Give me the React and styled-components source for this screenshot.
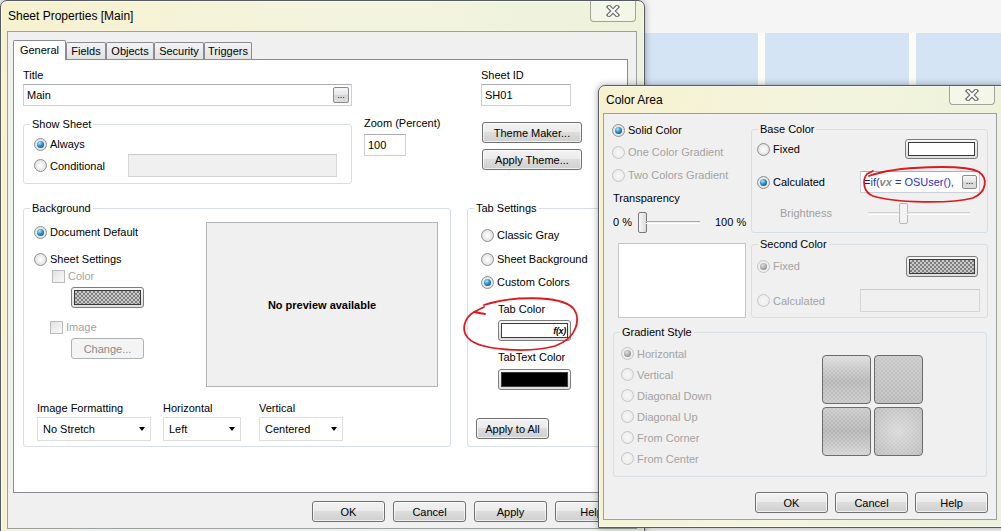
import React from 'react';
import styled, { createGlobalStyle } from 'styled-components';

const GlobalStyle = createGlobalStyle`
  html, body {
    margin: 0;
    padding: 0;
  }
  body {
    font-family: "Liberation Sans", Arial, sans-serif;
    font-size: 11px;
    color: #000;
    background: #fbfbfb;
  }
`;

const Desktop = styled.div`
  position: relative;
  width: 1001px;
  height: 531px;
  overflow: hidden;
  background: #fafafa;
`;

const TopStrip = styled.div`
  height: 33px;
  background: #f5f5f5;
`;

const TileRow = styled.div`
  display: flex;
  height: 52px;
  padding-left: 500px;
  gap: 7px;
  background: #fbfbf7;
`;

const Tile = styled.div`
  flex: none;
  width: ${p => p.$w}px;
  background: #d4e4f5;
`;

const Window = styled.div`
  position: absolute;
  left: ${p => p.$x}px;
  top: ${p => p.$y}px;
  width: ${p => p.$w}px;
  height: ${p => p.$h}px;
  box-sizing: border-box;
  display: flex;
  flex-direction: column;
  border: 1px solid #555b60;
  border-radius: 7px 7px 0 0;
  background: linear-gradient(100deg, #f7f1cf 0%, #f3f4de 45%, #edf2da 100%);
  box-shadow: 0 0 7px rgba(0, 0, 0, 0.35), inset 0 0 0 1px rgba(255, 255, 255, 0.6);
`;

const TitleBar = styled.div`
  display: flex;
  align-items: center;
  flex: none;
  height: ${p => p.$h}px;
  padding-left: 7px;
`;

const TitleText = styled.span`
  font-size: 12px;
  color: #000;
`;

const CloseButton = styled.div`
  box-sizing: border-box;
  align-self: flex-start;
  display: flex;
  align-items: center;
  justify-content: center;
  width: 46px;
  height: ${p => p.$h}px;
  margin-left: auto;
  margin-right: ${p => p.$mr}px;
  border: 1px solid rgba(60, 60, 60, 0.45);
  border-top: none;
  border-radius: 0 0 4px 4px;
  background: rgba(255, 255, 255, 0.35);
`;

const Client = styled.div`
  box-sizing: border-box;
  display: flex;
  flex-direction: column;
  width: ${p => p.$w}px;
  margin-left: ${p => p.$ml}px;
  padding: ${p => p.$p};
  border: 1px solid #98a1a9;
  background: #f0f0f0;
`;

const TabStrip = styled.div`
  display: flex;
  align-items: flex-end;
  height: 19px;
`;

const Tab = styled.div`
  box-sizing: border-box;
  position: ${p => (p.$active ? 'relative' : 'static')};
  z-index: 2;
  display: flex;
  align-items: center;
  justify-content: center;
  width: ${p => p.$w}px;
  height: ${p => (p.$active ? 20 : 17)}px;
  margin-bottom: ${p => (p.$active ? -1 : 0)}px;
  padding-bottom: ${p => (p.$active ? 2 : 0)}px;
  border: 1px solid #898c95;
  border-bottom: none;
  border-radius: 2px 2px 0 0;
  background: ${p => (p.$active ? '#fff' : 'linear-gradient(#f3f3f3, #e3e3e3)')};
`;

const TabPanel = styled.div`
  box-sizing: border-box;
  height: 434px;
  padding: 8px 0 0 9px;
  border: 1px solid #898c95;
  background: #fff;
`;

const Row = styled.div`
  display: flex;
  align-items: ${p => p.$align || 'flex-start'};
  margin-top: ${p => p.$mt || 0}px;
`;

const Column = styled.div`
  box-sizing: border-box;
  display: flex;
  flex-direction: column;
  flex: none;
  width: ${p => (p.$w ? `${p.$w}px` : 'auto')};
  margin-left: ${p => p.$ml || 0}px;
  margin-top: ${p => p.$mt || 0}px;
  padding-left: ${p => p.$pl || 0}px;
`;

const Label = styled.div`
  flex: none;
  height: 14px;
  line-height: 14px;
  white-space: nowrap;
  width: ${p => (p.$w ? `${p.$w}px` : 'auto')};
  margin-top: ${p => p.$mt || 0}px;
  margin-left: ${p => p.$ml || 0}px;
  color: ${p => (p.$disabled ? '#a0a0a0' : '#000')};
`;

const TextField = styled.div`
  box-sizing: border-box;
  display: flex;
  align-items: center;
  flex: none;
  width: ${p => (p.$w ? `${p.$w}px` : '100%')};
  height: ${p => p.$h || 22}px;
  margin-top: ${p => p.$mt || 0}px;
  margin-left: ${p => (p.$auto ? 'auto' : '0')};
  margin-right: ${p => p.$mr || 0}px;
  padding: 0 2px 0 3px;
  border: 1px solid ${p => (p.$disabled ? '#d6d6d6' : '#ccd0d6')};
  border-top-color: ${p => (p.$disabled ? '#cacaca' : '#abadb3')};
  background: ${p => (p.$disabled ? '#f0f0f0' : '#fff')};
  white-space: nowrap;
  overflow: hidden;
`;

const DotsButton = styled.div`
  box-sizing: border-box;
  flex: none;
  display: flex;
  align-items: flex-end;
  justify-content: center;
  width: ${p => p.$w || 16}px;
  height: ${p => p.$h || 16}px;
  margin-left: auto;
  padding-bottom: 2px;
  border: 1px solid #8a8a8a;
  border-radius: 2px;
  background: linear-gradient(#f7f7f7, #e4e4e4 50%, #d5d5d5 51%, #dedede);
  font-size: 9px;
  line-height: 1;
`;

const Group = styled.fieldset`
  box-sizing: border-box;
  flex: none;
  min-width: 0;
  width: ${p => (p.$w ? `${p.$w}px` : 'auto')};
  margin: ${p => p.$m || '0'};
  padding: 0;
  border: 1px solid #d5dfe5;
  border-radius: 3px;
`;

const Legend = styled.legend`
  height: 14px;
  margin-left: 6px;
  padding: 0 2px;
  line-height: 14px;
  font-size: 11px;
`;

const GroupBody = styled.div`
  display: flex;
  flex-direction: ${p => p.$dir || 'column'};
  padding: ${p => p.$p || '0'};
`;

const RadioRow = styled.div`
  display: flex;
  align-items: center;
  gap: 3px;
  flex: none;
  height: ${p => p.$h || 20}px;
  margin-top: ${p => p.$mt || 0}px;
  padding-left: ${p => p.$pl || 0}px;
  white-space: nowrap;
`;

const Radio = styled.span`
  position: relative;
  box-sizing: border-box;
  flex: none;
  width: 13px;
  height: 13px;
  border-radius: 50%;
  border: 1px solid ${p => (p.$disabled ? '#c4c6c8' : '#8e8f8f')};
  background: ${p =>
    p.$disabled
      ? 'radial-gradient(circle, #f8f8f8 0, #eeeeee 60%, #e2e2e2 100%)'
      : 'radial-gradient(circle, #ffffff 0, #eeeeee 45%, #d2d2d2 100%)'};

  &::after {
    content: '';
    display: ${p => (p.$checked ? 'block' : 'none')};
    position: absolute;
    left: 2px;
    top: 2px;
    width: 7px;
    height: 7px;
    border-radius: 50%;
    background: ${p =>
      p.$disabled
        ? 'radial-gradient(circle at 40% 35%, #e2e2e2 0, #a4a4a4 55%, #7c7c7c 100%)'
        : 'radial-gradient(circle at 38% 32%, #b4ecff 0, #3596d4 40%, #0d4e7a 85%)'};
  }
`;

const OptionText = styled.span`
  color: ${p => (p.$disabled ? '#a3a3a3' : '#000')};
`;

const Checkbox = styled.span`
  box-sizing: border-box;
  flex: none;
  width: 13px;
  height: 13px;
  border: 1px solid #b9bbbd;
  background: linear-gradient(135deg, #e3e3e3, #f9f9f9);
`;

const Button = styled.div`
  box-sizing: border-box;
  flex: none;
  display: flex;
  align-items: center;
  justify-content: center;
  width: ${p => p.$w || 73}px;
  height: 21px;
  margin-top: ${p => p.$mt || 0}px;
  margin-left: ${p => p.$ml || 0}px;
  border: 1px solid ${p => (p.$disabled ? '#adb2b5' : '#707070')};
  border-radius: 3px;
  background: ${p =>
    p.$disabled ? '#f4f4f4' : 'linear-gradient(#f2f2f2 0%, #ebebeb 45%, #dddddd 50%, #cfcfcf 100%)'};
  box-shadow: ${p => (p.$disabled ? 'none' : 'inset 0 0 0 1px rgba(255, 255, 255, 0.7)')};
  color: ${p => (p.$disabled ? '#8b8b8b' : '#000')};
  white-space: nowrap;
`;

const ButtonRow = styled.div`
  display: flex;
  justify-content: flex-end;
  gap: ${p => p.$gap}px;
  margin-top: ${p => p.$mt}px;
  padding-right: ${p => p.$pr || 0}px;
`;

const fills = {
  white: '#fff',
  black: '#000',
  check: 'repeating-conic-gradient(#7f7f7f 0 25%, #c9c9c9 0 50%) 0 0 / 4px 4px'
};

const Swatch = styled.div`
  box-sizing: border-box;
  flex: none;
  display: flex;
  width: ${p => p.$w || 73}px;
  height: ${p => p.$h || 21}px;
  margin-top: ${p => p.$mt || 0}px;
  margin-left: ${p => (p.$auto ? 'auto' : `${p.$ml || 0}px`)};
  margin-right: ${p => p.$mr || 0}px;
  padding: 2px;
  border: 1px solid #7c7c7c;
  border-radius: 3px;
  background: linear-gradient(#f7f7f7, #dedede);
`;

const SwatchFill = styled.div`
  flex: 1;
  display: flex;
  align-items: center;
  justify-content: flex-end;
  padding-right: 1px;
  border: 1px solid #3a3a3a;
  background: ${p => fills[p.$fill]};
`;

const Fx = styled.span`
  font-size: 9px;
  font-weight: bold;
  font-style: italic;
  letter-spacing: -0.3px;
`;

const SelectField = styled.div`
  box-sizing: border-box;
  display: flex;
  align-items: center;
  justify-content: space-between;
  width: ${p => p.$w}px;
  height: 24px;
  margin-top: 2px;
  padding: 0 5px;
  border: 1px solid #dedede;
  background: #fff;
`;

const Arrow = styled.span`
  width: 0;
  height: 0;
  border-left: 3.5px solid transparent;
  border-right: 3.5px solid transparent;
  border-top: 4px solid #000;
`;

const Preview = styled.div`
  box-sizing: border-box;
  flex: none;
  display: flex;
  align-items: center;
  justify-content: center;
  width: ${p => p.$w}px;
  height: ${p => p.$h}px;
  margin-top: ${p => p.$mt || 0}px;
  margin-left: ${p => p.$ml || 0}px;
  border: 1px solid ${p => (p.$white ? '#c6c6c6' : '#b4b4b4')};
  background: ${p => (p.$white ? '#fff' : '#f0f0f0')};
  font-weight: bold;
`;

const SliderBox = styled.div`
  display: flex;
  align-items: center;
  flex: none;
  width: ${p => p.$w}px;
  height: 21px;
  margin-left: ${p => (p.$auto ? 'auto' : `${p.$ml || 0}px`)};
  margin-right: ${p => p.$mr || 0}px;
`;

const Track = styled.div`
  flex: ${p => (p.$w ? 'none' : '1')};
  width: ${p => (p.$w ? `${p.$w}px` : 'auto')};
  height: 1px;
  border-top: 1px solid ${p => (p.$disabled ? '#cfcfcf' : '#a9a9a9')};
  border-bottom: 1px solid #fff;
`;

const Thumb = styled.div`
  box-sizing: border-box;
  flex: none;
  width: 9px;
  height: 21px;
  margin-right: -1px;
  border: 1px solid ${p => (p.$disabled ? '#b8b8b8' : '#777')};
  border-radius: 2px;
  background: ${p => (p.$disabled ? '#f3f3f3' : 'linear-gradient(90deg, #f8f8f8, #dcdcdc)')};
`;

const Expr = styled.span`
  color: ${p => p.$c};
  font-weight: ${p => (p.$var ? 'bold' : 'normal')};
  font-style: ${p => (p.$var ? 'italic' : 'normal')};
`;

const GradientGrid = styled.div`
  display: grid;
  grid-template-columns: 49px 49px;
  grid-auto-rows: 49px;
  gap: 3px;
  margin-top: 16px;
`;

const GradientCell = styled.div`
  box-sizing: border-box;
  border: 1px solid #6c6c6c;
  border-radius: 4px;
  background: repeating-conic-gradient(rgba(255, 255, 255, 0.16) 0 25%, transparent 0 50%) 0 0 / 4px 4px,
    ${p => p.$bg};
`;

const Spacer = styled.div`
  flex: none;
  height: ${p => p.$h}px;
`;

const Annotation = styled.svg`
  position: absolute;
  left: ${p => p.$x}px;
  top: ${p => p.$y}px;
  overflow: visible;
  pointer-events: none;
`;

const CloseGlyph = () => (
  <svg width="16" height="12" viewBox="0 0 16 12">
    <path d="M4 2 L12 10 M12 2 L4 10" stroke="#6a6a6a" strokeWidth="4.4" strokeLinecap="square" />
    <path d="M4 2 L12 10 M12 2 L4 10" stroke="#fff" strokeWidth="2" strokeLinecap="square" />
  </svg>
);

const tabs = [
  { name: 'General', w: 53, active: true },
  { name: 'Fields', w: 40 },
  { name: 'Objects', w: 48 },
  { name: 'Security', w: 50 },
  { name: 'Triggers', w: 48 }
];

const gradientOptions = ['Horizontal', 'Vertical', 'Diagonal Down', 'Diagonal Up', 'From Corner', 'From Center'];

const gradientCells = [
  'linear-gradient(#dcdcdc, #b6b6b6 55%, #c6c6c6)',
  'linear-gradient(#c8c8c8, #bababa)',
  'linear-gradient(#c9c9c9, #b3b3b3 50%, #d3d3d3)',
  'radial-gradient(circle, #d9d9d9, #bcbcbc)'
];

function SheetProperties() {
  return (
    <Window $x={0} $y={0} $w={645} $h={540}>
      <TitleBar $h={30}>
        <TitleText>Sheet Properties [Main]</TitleText>
        <CloseButton $h={21} $mr={8}>
          <CloseGlyph />
        </CloseButton>
      </TitleBar>
      <Client $w={630} $ml={6} $p="8px 8px 6px 5px">
        <TabStrip>
          {tabs.map(tab => (
            <Tab key={tab.name} $w={tab.w} $active={tab.active}>
              {tab.name}
            </Tab>
          ))}
        </TabStrip>
        <TabPanel>
          <Row>
            <Column $w={329}>
              <Label>Title</Label>
              <TextField $mt={2}>
                Main
                <DotsButton>...</DotsButton>
              </TextField>
            </Column>
            <Column $w={90} $ml={129}>
              <Label>Sheet ID</Label>
              <TextField $mt={2}>SH01</TextField>
            </Column>
          </Row>

          <Row $mt={10}>
            <Group $w={329} $m="1px 0 0 0">
              <Legend>Show Sheet</Legend>
              <GroupBody $p="3px 14px 6px 10px">
                <RadioRow>
                  <Radio $checked />
                  <OptionText>Always</OptionText>
                </RadioRow>
                <RadioRow $h={23}>
                  <Radio />
                  <OptionText>Conditional</OptionText>
                  <TextField $w={209} $h={23} $auto $disabled />
                </RadioRow>
              </GroupBody>
            </Group>
            <Column $w={117} $ml={12}>
              <Label>Zoom (Percent)</Label>
              <TextField $w={42} $mt={4}>100</TextField>
            </Column>
            <Column $pl={1}>
              <Button $w={100} $mt={6}>Theme Maker...</Button>
              <Button $w={100} $mt={6}>Apply Theme...</Button>
            </Column>
          </Row>

          <Row $mt={17} $align="stretch">
            <Group $w={428}>
              <Legend>Background</Legend>
              <GroupBody>
                <Row>
                  <Column $w={182} $pl={10}>
                    <RadioRow $mt={7}>
                      <Radio $checked />
                      <OptionText>Document Default</OptionText>
                    </RadioRow>
                    <RadioRow $mt={7}>
                      <Radio />
                      <OptionText>Sheet Settings</OptionText>
                    </RadioRow>
                    <RadioRow $h={14} $pl={18}>
                      <Checkbox />
                      <OptionText $disabled>Color</OptionText>
                    </RadioRow>
                    <Swatch $mt={4} $ml={37}>
                      <SwatchFill $fill="check" />
                    </Swatch>
                    <RadioRow $h={14} $mt={12} $pl={16}>
                      <Checkbox />
                      <OptionText $disabled>Image</OptionText>
                    </RadioRow>
                    <Button $disabled $mt={4} $ml={37}>Change...</Button>
                  </Column>
                  <Preview $w={232} $h={165} $mt={7}>No preview available</Preview>
                </Row>
                <Row $mt={14}>
                  <Column $w={114} $ml={13}>
                    <Label>Image Formatting</Label>
                    <SelectField $w={114}>No Stretch<Arrow /></SelectField>
                  </Column>
                  <Column $w={78} $ml={12}>
                    <Label>Horizontal</Label>
                    <SelectField $w={78}>Left<Arrow /></SelectField>
                  </Column>
                  <Column $w={84} $ml={18}>
                    <Label>Vertical</Label>
                    <SelectField $w={84}>Centered<Arrow /></SelectField>
                  </Column>
                </Row>
                <Spacer $h={5} />
              </GroupBody>
            </Group>

            <Group $w={151} $m="0 0 0 16px">
              <Legend>Tab Settings</Legend>
              <GroupBody>
                <RadioRow $mt={10} $pl={13}>
                  <Radio />
                  <OptionText>Classic Gray</OptionText>
                </RadioRow>
                <RadioRow $mt={4} $pl={13}>
                  <Radio />
                  <OptionText>Sheet Background</OptionText>
                </RadioRow>
                <RadioRow $mt={3} $pl={13}>
                  <Radio $checked />
                  <OptionText>Custom Colors</OptionText>
                </RadioRow>
                <Label $mt={10} $ml={30}>Tab Color</Label>
                <Swatch $mt={4} $ml={30}>
                  <SwatchFill $fill="white">
                    <Fx>f(x)</Fx>
                  </SwatchFill>
                </Swatch>
                <Label $mt={9} $ml={30}>TabText Color</Label>
                <Swatch $mt={5} $ml={30}>
                  <SwatchFill $fill="black" />
                </Swatch>
                <Button $mt={28} $ml={8}>Apply to All</Button>
              </GroupBody>
            </Group>
          </Row>
        </TabPanel>
        <ButtonRow $gap={8} $mt={8}>
          <Button>OK</Button>
          <Button>Cancel</Button>
          <Button>Apply</Button>
          <Button>Help</Button>
        </ButtonRow>
      </Client>
    </Window>
  );
}

function ColorArea() {
  return (
    <Window $x={598} $y={85} $w={410} $h={443}>
      <TitleBar $h={27}>
        <TitleText>Color Area</TitleText>
        <CloseButton $h={19} $mr={12}>
          <CloseGlyph />
        </CloseButton>
      </TitleBar>
      <Client $w={394} $ml={4} $p="0 0 6px 0">
        <Row>
          <Column $w={147} $pl={8}>
            <RadioRow $mt={6}>
              <Radio $checked />
              <OptionText>Solid Color</OptionText>
            </RadioRow>
            <RadioRow $mt={2}>
              <Radio $disabled />
              <OptionText $disabled>One Color Gradient</OptionText>
            </RadioRow>
            <RadioRow $mt={3}>
              <Radio $disabled />
              <OptionText $disabled>Two Colors Gradient</OptionText>
            </RadioRow>
            <Label $mt={6} $ml={1}>Transparency</Label>
            <RadioRow $h={24} $mt={5} $pl={1}>
              <Label $w={22}>0 %</Label>
              <SliderBox $w={62}>
                <Thumb />
                <Track />
              </SliderBox>
              <Label $ml={12}>100 %</Label>
            </RadioRow>
            <Preview $white $w={128} $h={75} $mt={9} $ml={6} />
          </Column>
          <Column $w={237} $mt={8}>
            <Group>
              <Legend>Base Color</Legend>
              <GroupBody $p="2px 0 9px 5px">
                <RadioRow $h={22}>
                  <Radio />
                  <OptionText>Fixed</OptionText>
                  <Swatch $auto $mr={9} $h={20}>
                    <SwatchFill $fill="white" />
                  </Swatch>
                </RadioRow>
                <RadioRow $h={22} $mt={11}>
                  <Radio $checked />
                  <OptionText>Calculated</OptionText>
                  <TextField $w={120} $auto $mr={7}>
                    <Expr $c="#1a1a8c">=</Expr>
                    <Expr $c="#2533c8">if(</Expr>
                    <Expr $c="#8a8a8a" $var>vx</Expr>
                    <Expr $c="#2533c8">&nbsp;= OSUser(),</Expr>
                    <DotsButton $w={15} $h={14}>...</DotsButton>
                  </TextField>
                </RadioRow>
                <RadioRow $mt={10}>
                  <Label $ml={23} $disabled>Brightness</Label>
                  <SliderBox $w={102} $auto $mr={17}>
                    <Track $w={31} $disabled />
                    <Thumb $disabled />
                    <Track $disabled />
                  </SliderBox>
                </RadioRow>
              </GroupBody>
            </Group>
            <Group $m="4px 0 0 0">
              <Legend>Second Color</Legend>
              <GroupBody $p="4px 0 5px 5px">
                <RadioRow $h={22}>
                  <Radio $checked $disabled />
                  <OptionText $disabled>Fixed</OptionText>
                  <Swatch $auto $mr={9} $w={72}>
                    <SwatchFill $fill="check" />
                  </Swatch>
                </RadioRow>
                <RadioRow $h={23} $mt={12}>
                  <Radio $disabled />
                  <OptionText $disabled>Calculated</OptionText>
                  <TextField $w={120} $h={23} $auto $mr={7} $disabled />
                </RadioRow>
              </GroupBody>
            </Group>
          </Column>
        </Row>

        <Group $m="7px 9px 0 9px">
          <Legend>Gradient Style</Legend>
          <GroupBody $dir="row">
            <Column $w={208} $pl={7}>
              <Spacer $h={4} />
              {gradientOptions.map((name, i) => (
                <RadioRow key={name} $h={21}>
                  <Radio $disabled $checked={i === 0} />
                  <OptionText $disabled>{name}</OptionText>
                </RadioRow>
              ))}
              <Spacer $h={7} />
            </Column>
            <GradientGrid>
              {gradientCells.map((bg, i) => (
                <GradientCell key={i} $bg={bg} />
              ))}
            </GradientGrid>
          </GroupBody>
        </Group>

        <ButtonRow $gap={7} $mt={15} $pr={8}>
          <Button>OK</Button>
          <Button>Cancel</Button>
          <Button>Help</Button>
        </ButtonRow>
      </Client>
    </Window>
  );
}

export default function App() {
  return (
    <>
      <GlobalStyle />
      <Desktop>
        <TopStrip />
        <TileRow>
          <Tile $w={258} />
          <Tile $w={144} />
          <Tile $w={200} />
        </TileRow>
        <SheetProperties />
        <ColorArea />
        <Annotation $x={460} $y={293} width="122" height="62" viewBox="0 0 122 62">
          <path
            d="M24 12 C50 3, 100 2, 113 15 C121 25, 118 45, 95 53 C70 60, 20 58, 8 45 C1 37, 4 25, 14 19 L24 14 M14 19 L25 21"
            fill="none"
            stroke="#dc1a1f"
            strokeWidth="1.8"
            strokeLinecap="round"
          />
        </Annotation>
        <Annotation $x={855} $y={162} width="136" height="44" viewBox="0 0 136 44">
          <path
            d="M14 14 C40 4, 110 2, 124 10 C133 16, 132 30, 118 36 C95 42, 40 41, 18 34 C8 30, 7 18, 12 12 L18 9"
            fill="none"
            stroke="#dc1a1f"
            strokeWidth="1.8"
            strokeLinecap="round"
          />
        </Annotation>
      </Desktop>
    </>
  );
}
